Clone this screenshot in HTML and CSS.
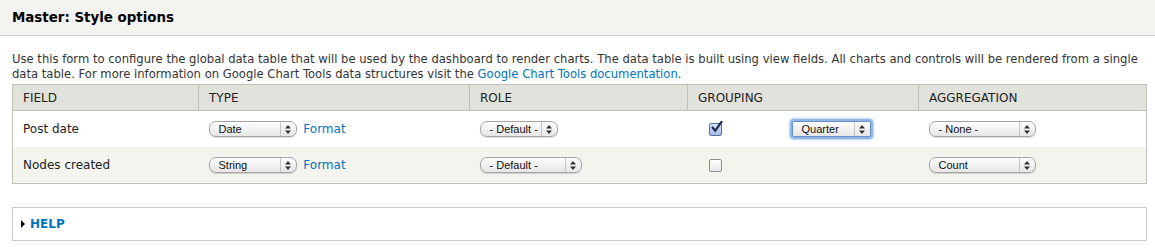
FILE: index.html
```html
<!DOCTYPE html>
<html lang="en">
<head>
    <meta charset="UTF-8">
    <title>Master: Style options</title>
    <link rel="stylesheet" href="styles.css">
</head>
<body>
    <div class="title-bar">
        <h1>Master: Style options</h1>
    </div>

    <div class="content">
        <p class="description">Use this form to configure the global data table that will be used by the dashboard to render charts. The data table is built using view fields. All charts and controls will be rendered from a single data table. For more information on Google Chart Tools data structures visit the <a href="#">Google Chart Tools documentation</a>.</p>

        <table class="fields-table">
            <thead>
                <tr>
                    <th class="col-field">Field</th>
                    <th class="col-type">Type</th>
                    <th class="col-role">Role</th>
                    <th class="col-grouping">Grouping</th>
                    <th class="col-aggregation">Aggregation</th>
                </tr>
            </thead>
            <tbody>
                <tr class="odd">
                    <td>Post date</td>
                    <td>
                        <span class="select w-type"><span class="select-value">Date</span><span class="select-arrows"><svg width="6" height="9" viewBox="0 0 6 9"><path d="M3 0 L6 3.5 H0 Z M3 9 L6 5.5 H0 Z" fill="#333"/></svg></span></span>
                        <a href="#" class="format-link">Format</a>
                    </td>
                    <td>
                        <span class="select w-role-short"><span class="select-value">- Default -</span><span class="select-arrows"><svg width="6" height="9" viewBox="0 0 6 9"><path d="M3 0 L6 3.5 H0 Z M3 9 L6 5.5 H0 Z" fill="#333"/></svg></span></span>
                    </td>
                    <td>
                        <div class="grouping">
                            <span class="checkbox checked"><svg width="13" height="13" viewBox="0 0 13 13"><path d="M2.5 6.5 L5.2 9.8 L11.5 0.8" stroke="#1d2a55" stroke-width="2.2" fill="none" stroke-linecap="round"/></svg></span>
                            <span class="select w-group focused"><span class="select-value">Quarter</span><span class="select-arrows"><svg width="6" height="9" viewBox="0 0 6 9"><path d="M3 0 L6 3.5 H0 Z M3 9 L6 5.5 H0 Z" fill="#333"/></svg></span></span>
                        </div>
                    </td>
                    <td>
                        <span class="select w-agg"><span class="select-value">- None -</span><span class="select-arrows"><svg width="6" height="9" viewBox="0 0 6 9"><path d="M3 0 L6 3.5 H0 Z M3 9 L6 5.5 H0 Z" fill="#333"/></svg></span></span>
                    </td>
                </tr>
                <tr class="even">
                    <td>Nodes created</td>
                    <td>
                        <span class="select w-type"><span class="select-value">String</span><span class="select-arrows"><svg width="6" height="9" viewBox="0 0 6 9"><path d="M3 0 L6 3.5 H0 Z M3 9 L6 5.5 H0 Z" fill="#333"/></svg></span></span>
                        <a href="#" class="format-link">Format</a>
                    </td>
                    <td>
                        <span class="select w-role"><span class="select-value">- Default -</span><span class="select-arrows"><svg width="6" height="9" viewBox="0 0 6 9"><path d="M3 0 L6 3.5 H0 Z M3 9 L6 5.5 H0 Z" fill="#333"/></svg></span></span>
                    </td>
                    <td>
                        <div class="grouping">
                            <span class="checkbox"></span>
                        </div>
                    </td>
                    <td>
                        <span class="select w-agg"><span class="select-value">Count</span><span class="select-arrows"><svg width="6" height="9" viewBox="0 0 6 9"><path d="M3 0 L6 3.5 H0 Z M3 9 L6 5.5 H0 Z" fill="#333"/></svg></span></span>
                    </td>
                </tr>
            </tbody>
        </table>

        <!-- collapsed help fieldset -->
        <div class="help-box">
            <span class="help-arrow"></span>
            <a href="#" class="help-link">Help</a>
        </div>
    </div>
</body>
</html>
```

FILE: styles.css
```css
body {
    margin: 0;
    font-family: "DejaVu Sans", sans-serif;
    font-size: 12px;
    color: #333;
    background-color: #fff;
}

a {
    color: #0074bd;
    text-decoration: none;
}

/* title bar */
.title-bar {
    background-color: #f3f3ef;
    border-bottom: 1px solid #ccc;
    height: 35px;
    padding: 0 12px;
    display: flex;
    align-items: center;
}

h1 {
    margin: 0;
    font-size: 13.4px;
    font-weight: bold;
    color: #000;
}

.content {
    padding: 0 8px 0 12px;
}

.description {
    margin: 16px 0 3px 0;
    line-height: 14.5px;
    font-size: 11.6px;
}

/* field table */
.fields-table {
    width: 100%;
    border-collapse: collapse;
    border: 1px solid #bebfb9;
    color: #222;
}

.fields-table th {
    background-color: #e1e2dc;
    text-align: left;
    font-weight: normal;
    text-transform: uppercase;
    height: 25px;
    padding: 0 10px;
    border-left: 1px solid #bebfb9;
    border-bottom: 1px solid #bebfb9;
}

.fields-table td {
    padding: 0 10px;
    height: 36px;
}

.fields-table tr.odd td {
    background-color: #fff;
}

.fields-table tr.even td {
    background-color: #f3f4ee;
}

.col-field { width: 165px; }
.col-type { width: 250px; }
.col-role { width: 197px; }
.col-grouping { width: 210px; }

/* mac style selects */
.select {
    display: inline-flex;
    align-items: stretch;
    vertical-align: middle;
    height: 14px;
    border: 1px solid #a5a5a5;
    border-radius: 7px;
    background: linear-gradient(#fdfdfd, #e6e6e6);
    font-family: "Liberation Sans", Arial, sans-serif;
    font-size: 11px;
    color: #111;
    box-shadow: 0 1px 1px rgba(0, 0, 0, 0.15);
}

.select-value {
    flex-grow: 1;
    padding-left: 9px;
    line-height: 14px;
    white-space: nowrap;
}

.select-arrows {
    width: 15px;
    border-left: 1px solid #c4c4c4;
    display: flex;
    align-items: center;
    justify-content: center;
}

.w-type { width: 86px; }
.w-role-short { width: 76px; }
.w-role { width: 100px; }
.w-group { width: 77px; border-radius: 2px; }
.w-agg { width: 105px; }

.select.focused {
    border-color: #6b8fc8;
    box-shadow: 0 0 0 2px #8fb5ea, 0 0 2px 3px rgba(120, 165, 230, 0.5);
}

.format-link {
    margin-left: 3px;
    vertical-align: middle;
}

.grouping {
    display: flex;
    align-items: center;
    gap: 70px;
    padding-left: 11px;
}

.checkbox {
    display: inline-block;
    width: 11px;
    height: 11px;
    border: 1px solid #8e8e8e;
    border-radius: 2px;
    background: linear-gradient(#fff, #e8e8e8);
    position: relative;
}

.checkbox.checked {
    background: linear-gradient(#d9e6f8, #9fbbe6);
    border-color: #5a6f9a;
}

.checkbox svg {
    position: absolute;
    left: 0;
    top: -3px;
}

/* help fieldset */
.help-box {
    margin-top: 23px;
    border: 1px solid #ccc;
    height: 32px;
    display: flex;
    align-items: center;
    padding-left: 8px;
}

.help-arrow {
    width: 0;
    height: 0;
    border-top: 4px solid transparent;
    border-bottom: 4px solid transparent;
    border-left: 4px solid #000;
    margin-right: 5px;
}

.help-link {
    font-weight: bold;
    font-size: 12px;
    text-transform: uppercase;
}
```
